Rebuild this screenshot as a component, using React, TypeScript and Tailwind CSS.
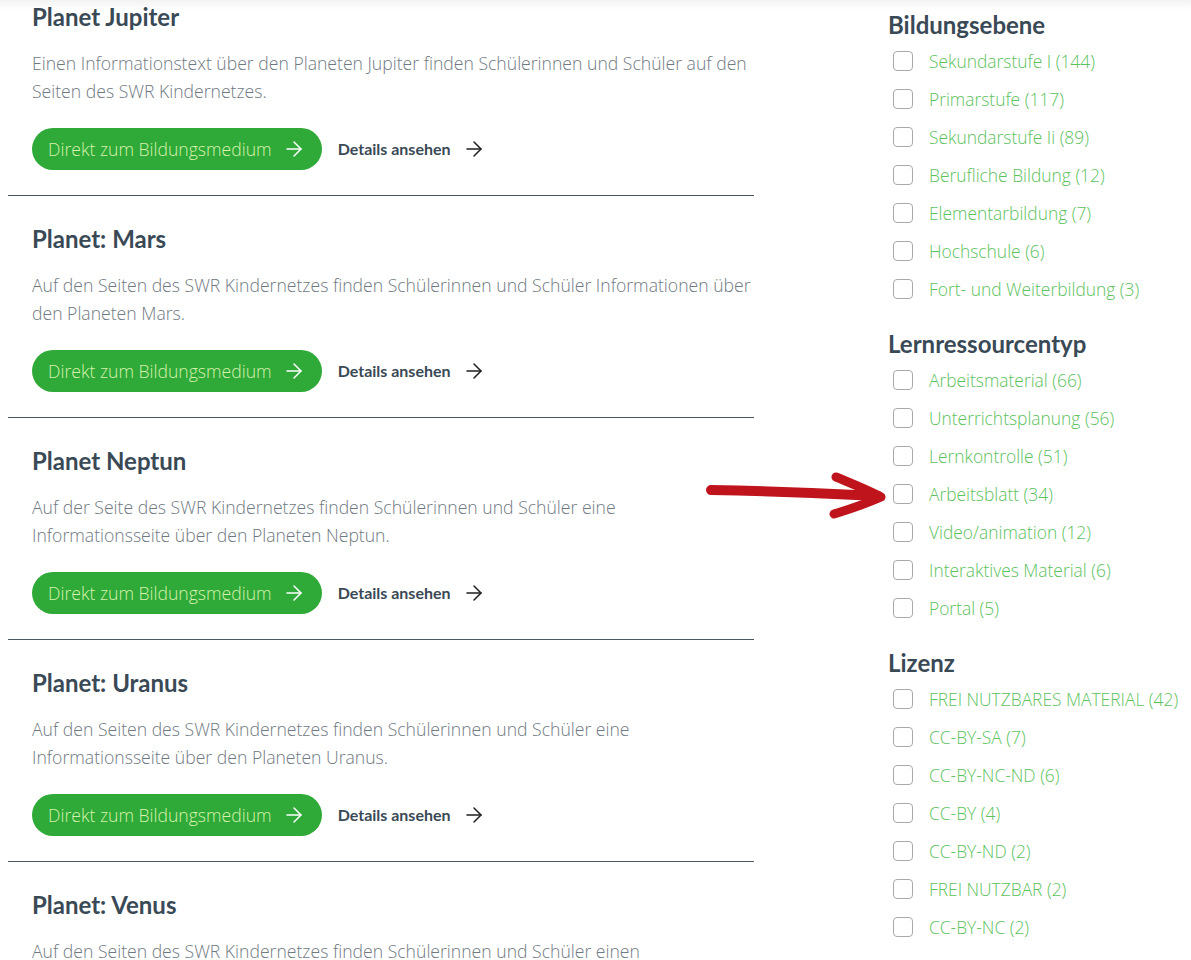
import React from 'react';
import { ArrowRight } from 'lucide-react';

type Medium = {
  title: string;
  text: string;
};

const media: Medium[] = [
  {
    title: 'Planet Jupiter',
    text: 'Einen Informationstext über den Planeten Jupiter finden Schülerinnen und Schüler auf den Seiten des SWR Kindernetzes.',
  },
  {
    title: 'Planet: Mars',
    text: 'Auf den Seiten des SWR Kindernetzes finden Schülerinnen und Schüler Informationen über den Planeten Mars.',
  },
  {
    title: 'Planet Neptun',
    text: 'Auf der Seite des SWR Kindernetzes finden Schülerinnen und Schüler eine Informationsseite über den Planeten Neptun.',
  },
  {
    title: 'Planet: Uranus',
    text: 'Auf den Seiten des SWR Kindernetzes finden Schülerinnen und Schüler eine Informationsseite über den Planeten Uranus.',
  },
  {
    title: 'Planet: Venus',
    text: 'Auf den Seiten des SWR Kindernetzes finden Schülerinnen und Schüler einen Informationstext über den Planeten Venus.',
  },
];

const filters: { title: string; items: string[] }[] = [
  {
    title: 'Bildungsebene',
    items: [
      'Sekundarstufe I (144)',
      'Primarstufe (117)',
      'Sekundarstufe Ii (89)',
      'Berufliche Bildung (12)',
      'Elementarbildung (7)',
      'Hochschule (6)',
      'Fort- und Weiterbildung (3)',
    ],
  },
  {
    title: 'Lernressourcentyp',
    items: [
      'Arbeitsmaterial (66)',
      'Unterrichtsplanung (56)',
      'Lernkontrolle (51)',
      'Arbeitsblatt (34)',
      'Video/animation (12)',
      'Interaktives Material (6)',
      'Portal (5)',
    ],
  },
  {
    title: 'Lizenz',
    items: [
      'FREI NUTZBARES MATERIAL (42)',
      'CC-BY-SA (7)',
      'CC-BY-NC-ND (6)',
      'CC-BY (4)',
      'CC-BY-ND (2)',
      'FREI NUTZBAR (2)',
      'CC-BY-NC (2)',
    ],
  },
];

const light = { fontFamily: '"Open Sans", "Noto Sans", sans-serif' };

function MediumCard({ item, first }: { item: Medium; first?: boolean }) {
  return (
    <article className={`border-b border-[#4b5760] pl-6 pr-0 pt-[29px] pb-[25px] ${first ? '-mt-[26px]' : ''}`}>
      <h2 className="text-[24px] leading-[28px] font-bold text-[#3a4956]">{item.title}</h2>
      <p className="mt-[18px] max-w-[722px] text-[17.6px] leading-[28px] text-[#6f7982] font-light" style={light}>
        {item.text}
      </p>
      <div className="mt-[23px] flex items-center">
        <button
          className="h-[42px] rounded-full bg-[#2fa937] pl-4 pr-4 flex items-center gap-[10px] text-[17.6px] font-light text-[#d6f2ae]"
          style={light}
        >
          Direkt zum Bildungsmedium
          <ArrowRight size={24} strokeWidth={1.5} className="text-white" />
        </button>
        <a className="ml-4 flex items-center gap-[11px] text-[16px] font-bold text-[#3a4956]">
          Details ansehen
          <ArrowRight size={24} strokeWidth={1.5} className="text-[#1f1f1f]" />
        </a>
      </div>
    </article>
  );
}

export default function App() {
  return (
    <div className="relative h-[960px] overflow-hidden bg-white" style={{ fontFamily: 'Lato, "Noto Sans", sans-serif' }}>
      <div className="flex px-2">
        <main className="w-[746px] shrink-0">
          {media.map((m, i) => (
            <MediumCard key={m.title} item={m} first={i === 0} />
          ))}
        </main>

        <aside className="ml-[134px] pt-[11px]">
          {filters.map((f, i) => (
            <section key={f.title} className={i > 0 ? 'mt-[22px]' : ''}>
              <h3 className="text-[24px] leading-[28px] font-bold text-[#3a4956]">{f.title}</h3>
              <ul className="mt-[3px]">
                {f.items.map((label) => (
                  <li key={label} className="h-[38px] flex items-center whitespace-nowrap">
                    <span className="ml-[5px] w-[20px] h-[20px] rounded-[4px] border border-[#a9a9a9] bg-white shrink-0" />
                    <span className="ml-4 text-[17.4px] font-light text-[#5cc25c]" style={light}>
                      {label}
                    </span>
                  </li>
                ))}
              </ul>
            </section>
          ))}
        </aside>
      </div>

      {/* header shadow */}
      <div className="pointer-events-none absolute inset-x-0 top-0 h-[10px] bg-gradient-to-b from-black/5 to-transparent" />

      {/* hand drawn annotation arrow */}
      <svg className="pointer-events-none absolute left-0 top-0" width="1191" height="960">
        <g stroke="#c0141c" strokeLinecap="round" strokeLinejoin="round" fill="none">
          <path d="M711 490 C 760 491, 820 493, 878 496" strokeWidth="10" />
          <path d="M836 477 C 855 485, 870 491, 881 497 C 868 503, 850 509, 834 514" strokeWidth="9" />
        </g>
      </svg>
    </div>
  );
}
